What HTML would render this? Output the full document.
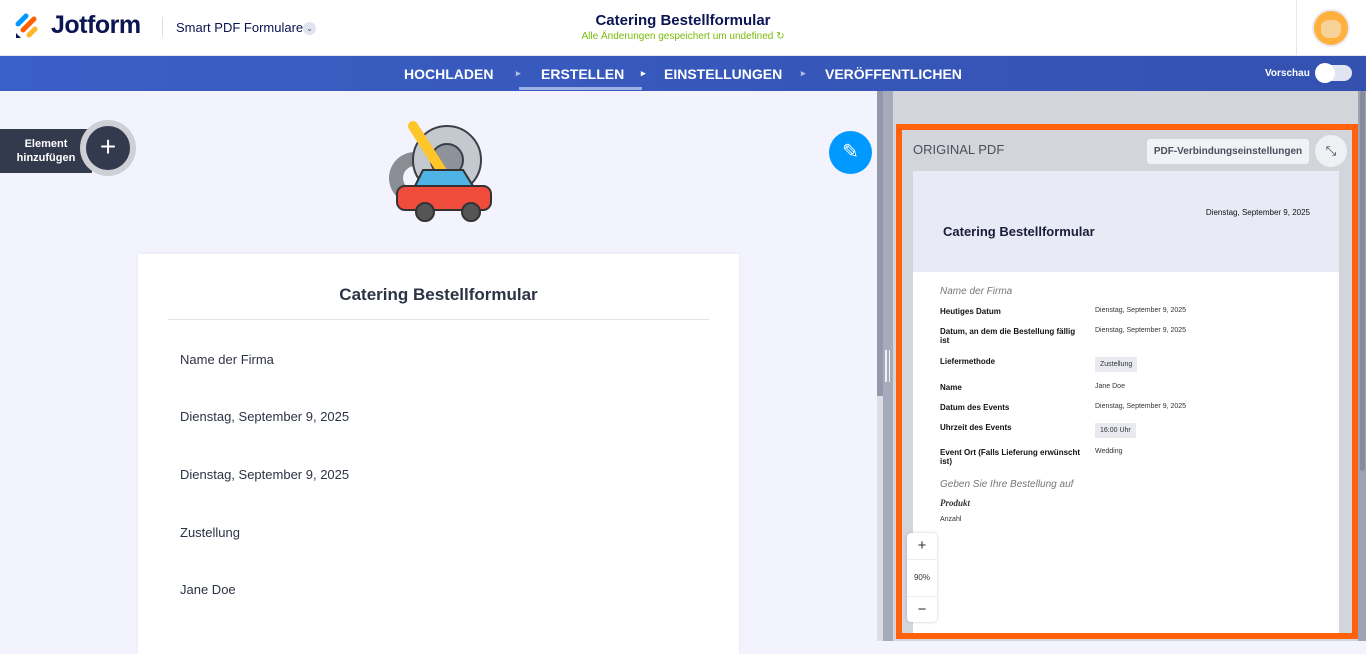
<!DOCTYPE html><html><head><meta charset="utf-8"><style>
*{box-sizing:border-box;margin:0;padding:0}
body{width:1366px;height:641px;overflow:hidden;font-family:"Liberation Sans",sans-serif;background:#f3f3fe;position:relative}
.a{position:absolute}
.top{left:0;top:0;width:1366px;height:56px;background:#fff;border-bottom:1px solid #e3e5f0}
.nav{left:0;top:56px;width:1366px;height:35px;background:linear-gradient(90deg,#3a5fc6,#3451b0);color:#fff;font-weight:bold;font-size:14px}
.nav span{position:absolute;top:10px}
.lbl{font-size:13px;color:#2c3345}
.pl{font-size:8px;color:#111;font-weight:bold}
.pv{font-size:7px;color:#333}
</style></head><body>
<div class="a top">
 <svg class="a" style="left:15px;top:13px" width="24" height="26" viewBox="0 0 24 26"><path d="M3 11 L11 3" stroke="#0099ff" stroke-width="5" stroke-linecap="round"/><path d="M8 17 L19 6" stroke="#ff6100" stroke-width="5" stroke-linecap="round"/><path d="M14 22 L20 16" stroke="#ffb629" stroke-width="5" stroke-linecap="round"/><path d="M1 20 L1 25 L6 25Z" fill="#0a1551"/></svg>
 <div class="a" style="left:51px;top:11px;font-size:25px;font-weight:bold;color:#0a1551;letter-spacing:-0.5px">Jotform</div>
 <div class="a" style="left:162px;top:17px;width:1px;height:20px;background:#dde"></div>
 <div class="a" style="left:176px;top:20px;font-size:13px;color:#0a1551">Smart PDF Formulare</div>
 <div class="a" style="left:303px;top:22px;width:13px;height:13px;border-radius:50%;background:#e0e3f0;font-size:8px;color:#556;text-align:center;line-height:13px">⌄</div>
 <div class="a" style="left:0;width:1366px;top:12px;text-align:center;font-size:15px;font-weight:bold;color:#0a1551">Catering Bestellformular</div>
 <div class="a" style="left:0;width:1366px;top:31px;text-align:center;font-size:10px;color:#78bb07">Alle Änderungen gespeichert um undefined ↻</div>
 <div class="a" style="left:1296px;top:0;width:1px;height:56px;background:#e3e5f0"></div>
 <div class="a" style="left:1312px;top:9px;width:38px;height:38px;border-radius:50%;background:#ffb13d;border:2px solid #e9eaf3"></div>
 <div class="a" style="left:1321px;top:20px;width:20px;height:18px;border-radius:40%;background:#f7d39a"></div>
</div>
<div class="a nav">
 <span style="left:404px">HOCHLADEN</span><span style="left:516px;font-size:9px;top:12px;opacity:.6">▸</span>
 <span style="left:541px">ERSTELLEN</span><span style="left:641px;font-size:9px;top:12px">▸</span>
 <div class="a" style="left:519px;top:31px;width:123px;height:3px;background:#9fb1e6"></div>
 <span style="left:664px">EINSTELLUNGEN</span><span style="left:801px;font-size:9px;top:12px;opacity:.6">▸</span>
 <span style="left:825px">VERÖFFENTLICHEN</span>
 <span style="left:1265px;font-size:10px;top:12px">Vorschau</span>
 <div class="a" style="left:1316px;top:9px;width:36px;height:16px;border-radius:8px;background:#e1e5f3"></div>
 <div class="a" style="left:1315px;top:7px;width:20px;height:20px;border-radius:50%;background:#fff"></div>
</div>
<!-- left -->
<div class="a" style="left:0;top:129px;height:44px;background:#343a4e;color:#fff;font-size:11px;font-weight:bold;text-align:center;line-height:14px;padding-top:8px;width:92px">Element<br>hinzufügen</div>
<div class="a" style="left:80px;top:120px;width:56px;height:56px;border-radius:50%;background:#cfd0d6"></div>
<div class="a" style="left:86px;top:126px;width:44px;height:44px;border-radius:50%;background:#343a4e;color:#fff;font-size:28px;text-align:center;line-height:42px;font-weight:300">+</div>
<svg class="a" style="left:385px;top:120px" width="110" height="108" viewBox="0 0 110 108"><circle cx="30" cy="58" r="26" fill="#8a8d93"/><circle cx="30" cy="58" r="12" fill="#f3f3fe"/><circle cx="62" cy="40" r="34" fill="#c4c8cf" stroke="#3b3f45" stroke-width="2"/><circle cx="62" cy="40" r="16" fill="#8e939b" stroke="#3b3f45" stroke-width="2"/><path d="M28 6 L60 56" stroke="#ffc629" stroke-width="10" stroke-linecap="round"/><path d="M30 66 L38 50 L78 50 L88 66Z" fill="#4fb3e6" stroke="#333" stroke-width="2"/><rect x="12" y="66" width="94" height="24" rx="8" fill="#ef4c3c" stroke="#333" stroke-width="2"/><circle cx="40" cy="92" r="9" fill="#555" stroke="#333" stroke-width="2"/><circle cx="86" cy="92" r="9" fill="#555" stroke="#333" stroke-width="2"/></svg>
<div class="a" style="left:829px;top:131px;width:43px;height:43px;border-radius:50%;background:#0099ff;color:#fff;text-align:center;line-height:43px;font-size:20px">✎</div>
<div class="a" style="left:138px;top:254px;width:601px;height:400px;background:#fff;box-shadow:0 0 4px rgba(0,0,0,.05)">
 <div class="a" style="left:0;width:601px;top:31px;text-align:center;font-size:17px;font-weight:bold;color:#2c3345">Catering Bestellformular</div>
 <div class="a" style="left:30px;top:65px;width:541px;height:1px;background:#e3e5ec"></div>
 <div class="a lbl" style="left:42px;top:98px">Name der Firma</div>
 <div class="a lbl" style="left:42px;top:155px">Dienstag, September 9, 2025</div>
 <div class="a lbl" style="left:42px;top:213px">Dienstag, September 9, 2025</div>
 <div class="a lbl" style="left:42px;top:271px">Zustellung</div>
 <div class="a lbl" style="left:42px;top:328px">Jane Doe</div>
</div>
<div class="a" style="left:877px;top:91px;width:6px;height:550px;background:#dcdde6"></div>
<div class="a" style="left:877px;top:91px;width:6px;height:305px;background:#9399ab"></div>
<!-- right -->
<div class="a" style="left:883px;top:91px;width:10px;height:550px;background:#a6abbb"></div>
<div class="a" style="left:885px;top:350px;width:2px;height:32px;background:#eef0f6"></div>
<div class="a" style="left:889px;top:350px;width:1px;height:32px;background:#eef0f6"></div>
<div class="a" style="left:893px;top:91px;width:465px;height:550px;background:#d4d5da"></div>
<div class="a" style="left:1358px;top:91px;width:8px;height:550px;background:#9ea3b4"></div>
<div class="a" style="left:1360px;top:91px;width:5px;height:380px;background:#858a9c;border-radius:3px"></div>
<div class="a" style="left:896px;top:124px;width:462px;height:515px;border:6px solid #ff610d"></div>
<div class="a" style="left:913px;top:142px;font-size:13px;color:#4a4f5c">ORIGINAL PDF</div>
<div class="a" style="left:1147px;top:139px;width:162px;height:25px;background:#f1f2f5;border-radius:3px;font-size:10px;font-weight:bold;color:#4a4f5c;text-align:center;line-height:25px">PDF-Verbindungseinstellungen</div>
<div class="a" style="left:1315px;top:135px;width:32px;height:32px;border-radius:50%;background:#eff0f4;color:#343a4e;text-align:center;line-height:32px;font-size:13px">⤡</div>
<div class="a" style="left:913px;top:171px;width:426px;height:462px;background:#fff">
 <div class="a" style="left:0;top:0;width:426px;height:101px;background:#e8eaf6"></div>
 <div class="a" style="right:29px;top:37px;font-size:8px;color:#111">Dienstag, September 9, 2025</div>
 <div class="a" style="left:30px;top:53px;font-size:13px;font-weight:bold;color:#1a1d3a">Catering Bestellformular</div>
 <div class="a" style="left:27px;top:115px;font-size:10px;color:#777;font-style:italic">Name der Firma</div>
 <div class="a pl" style="left:27px;top:136px">Heutiges Datum</div><div class="a pv" style="left:182px;top:136px">Dienstag, September 9, 2025</div>
 <div class="a pl" style="left:27px;top:156px;width:140px">Datum, an dem die Bestellung fällig ist</div><div class="a pv" style="left:182px;top:156px">Dienstag, September 9, 2025</div>
 <div class="a pl" style="left:27px;top:186px">Liefermethode</div><div class="a pv" style="left:182px;top:186px;background:#e8eaf0;padding:4px 5px">Zustellung</div>
 <div class="a pl" style="left:27px;top:212px">Name</div><div class="a pv" style="left:182px;top:212px">Jane Doe</div>
 <div class="a pl" style="left:27px;top:232px">Datum des Events</div><div class="a pv" style="left:182px;top:232px">Dienstag, September 9, 2025</div>
 <div class="a pl" style="left:27px;top:252px">Uhrzeit des Events</div><div class="a pv" style="left:182px;top:252px;background:#e8eaf0;padding:4px 5px">16:00 Uhr</div>
 <div class="a pl" style="left:27px;top:277px;width:150px">Event Ort (Falls Lieferung erwünscht ist)</div><div class="a pv" style="left:182px;top:277px">Wedding</div>
 <div class="a" style="left:27px;top:308px;font-size:10px;color:#777;font-style:italic">Geben Sie Ihre Bestellung auf</div>
 <div class="a" style="left:27px;top:327px;font-size:9px;font-family:'Liberation Serif',serif;font-style:italic;font-weight:bold;color:#333">Produkt</div>
 <div class="a pv" style="left:27px;top:345px">Anzahl</div>
</div>
<div class="a" style="left:907px;top:533px;width:30px;height:89px;background:#fff;border-radius:4px;box-shadow:0 0 3px rgba(0,0,0,.2);text-align:center;color:#333">
 <div style="font-size:15px;line-height:26px">+</div>
 <div style="font-size:8px;line-height:36px;border-top:1px solid #eee;border-bottom:1px solid #eee">90%</div>
 <div style="font-size:15px;line-height:26px">−</div>
</div>
</body></html>
